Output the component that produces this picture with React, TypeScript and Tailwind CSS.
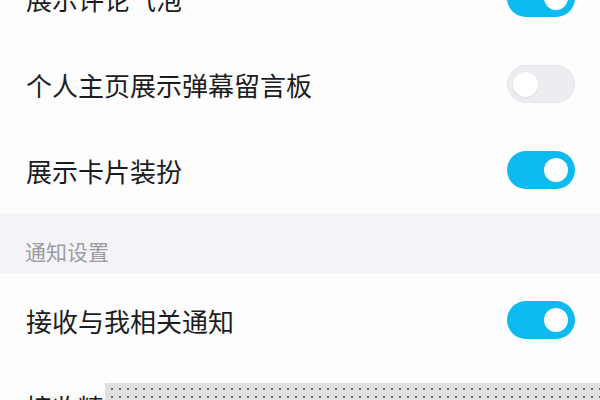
const rows1 = [
  { label: "展示评论气泡", on: true },
  { label: "个人主页展示弹幕留言板", on: false },
  { label: "展示卡片装扮", on: true },
];

const rows2 = [
  { label: "接收与我相关通知", on: true },
  { label: "接收精选推荐通知", on: true },
];

const Toggle = ({ on }: { on: boolean }) => (
  <div
    className={
      on
        ? "flex h-[38px] w-[68px] items-center justify-end rounded-full bg-[#0dbaf0] pr-[7px]"
        : "flex h-[38px] w-[68px] items-center justify-start rounded-full border border-[#e4e4ea] bg-[#ececf1] pl-[5px]"
    }
  >
    <div
      className={
        on
          ? "h-[24px] w-[24px] rounded-full bg-white"
          : "h-[25px] w-[25px] rounded-full bg-white shadow-[0_1px_2px_rgba(0,0,0,0.08)]"
      }
    />
  </div>
);

const Row = ({ label, on }: { label: string; on: boolean }) => (
  <div className="flex h-[86px] items-center justify-between bg-[#fdfdfe] pl-[26px] pr-[25px]">
    <span className="text-[26px] text-[#1c1c1e]">{label}</span>
    <Toggle on={on} />
  </div>
);

export default function App() {
  return (
    <div
      className="relative h-[400px] w-[600px] overflow-hidden bg-[#fdfdfe]"
      style={{ fontFamily: '"Noto Sans CJK SC", "Noto Sans", sans-serif' }}
    >
      <div className="-mt-[45px] flex flex-col">
        {rows1.map((r) => (
          <Row key={r.label} {...r} />
        ))}
        <div className="flex h-[60px] items-end bg-[#f4f4f8] pb-[8px] pl-[25px]">
          <span className="text-[21px] leading-[28px] text-[#9b9ba0]">通知设置</span>
        </div>
        <div className="flex flex-col pt-[4px]">
          {rows2.map((r) => (
            <Row key={r.label} {...r} />
          ))}
        </div>
      </div>

      {/* transparency grid pasted over the bottom */}
      <div className="absolute bottom-0 left-[105px] right-0 top-[383px] bg-[#e0e0e0] bg-[radial-gradient(circle,#6a6a6a_1px,transparent_1.4px)] bg-[length:8px_8px] bg-[position:3px_2px]" />
    </div>
  );
}
